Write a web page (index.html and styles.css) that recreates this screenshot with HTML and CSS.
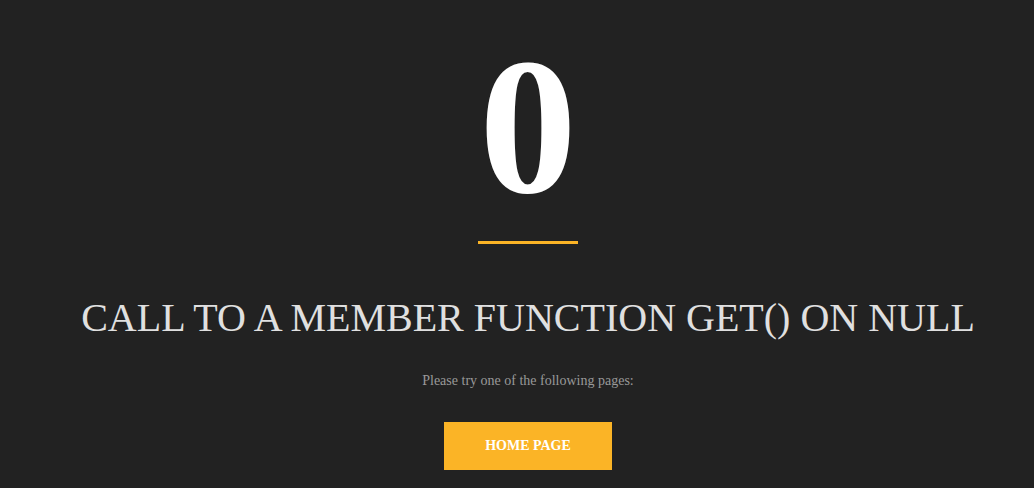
FILE: index.html
```html
<!DOCTYPE html>
<html>
  <head>
    <meta charset="utf-8" />
    <title>Error</title>
    <link rel="stylesheet" href="styles.css">
  </head>
  <body>
    <section class="error-page">
      <h1 class="error-code">0</h1>
      <hr class="divider" />
      <h2 class="error-message">Call to a member function get() on null</h2>
      <p class="error-hint">Please try one of the following pages:</p>
      <a class="btn-home" href="#">Home page</a>
    </section>
  </body>
</html>
```

FILE: styles.css
```css
html,
body {
  margin: 0;
  height: 100%;
}

body {
  background: #222222;
  font-family: 'Liberation Serif', 'Times New Roman', serif;
  color: #dddddd;
  --c-main: #fbb426;
}

.error-page {
  display: flex;
  flex-direction: column;
  align-items: center;
  text-align: center;
  padding: 29px 0 0 22px;
}

.error-code {
  margin: 0;
  font-size: 195px;
  line-height: 195px;
  font-weight: bold;
  color: #ffffff;
}

.divider {
  width: 100px;
  height: 3px;
  border: 0;
  margin: 17px 0 0;
  background: var(--c-main);
}

.error-message {
  margin: 50px 0 0;
  font-size: 40px;
  line-height: 48px;
  font-weight: normal;
  text-transform: uppercase;
  color: #e0e0e0;
}

.error-hint {
  margin: 31px 0 0;
  font-size: 14px;
  color: #999999;
}

.btn-home {
  display: block;
  margin-top: 33px;
  width: 168px;
  height: 48px;
  line-height: 48px;
  background: var(--c-main);
  color: #ffffff;
  font-size: 14px;
  font-weight: bold;
  text-transform: uppercase;
  text-decoration: none;
}
```
